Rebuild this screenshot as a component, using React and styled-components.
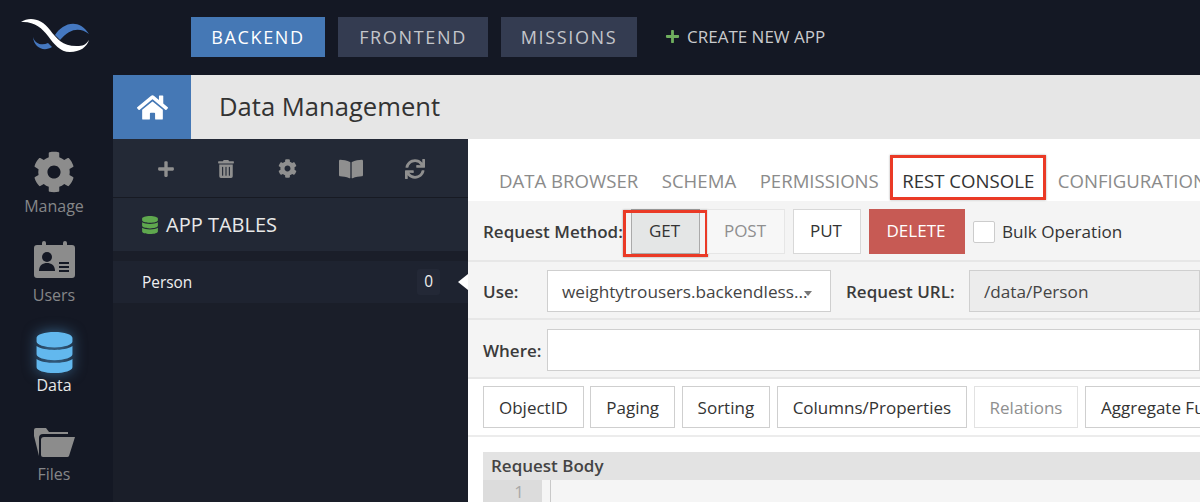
import React from 'react'
import styled, { createGlobalStyle } from 'styled-components'
import { FaHome, FaPlus, FaTrashAlt, FaCog, FaBookOpen, FaSync, FaDatabase } from 'react-icons/fa'

const GlobalStyle = createGlobalStyle`
  html, body {
    margin: 0;
    height: 100%;
    overflow: hidden;
    background: #141824;
    font-family: "Open Sans", "Liberation Sans", sans-serif;
  }
  * {
    box-sizing: border-box;
  }
`

const Page = styled.div`
  display: flex;
  flex-direction: column;
  width: 1200px;
  height: 502px;
  overflow: hidden;
`

const TopBar = styled.header`
  display: flex;
  align-items: flex-start;
  flex: 0 0 75px;
  padding-top: 17px;
`

const LogoSlot = styled.div`
  flex: 0 0 191px;
  margin-top: -7px;
  padding-left: 10px;
`

const NavButton = styled.div`
  display: flex;
  align-items: center;
  justify-content: center;
  width: ${(p) => p.$width}px;
  height: 40px;
  margin-right: 13px;
  background: ${(p) => (p.$active ? '#4578b5' : '#343c51')};
  color: ${(p) => (p.$active ? '#fff' : '#c4c6cb')};
  font-size: 18px;
  letter-spacing: 1.65px;
`

const CreateApp = styled.div`
  display: flex;
  align-items: center;
  gap: 7px;
  height: 38px;
  margin-left: 15px;
  color: #c9cacd;
  font-size: 17px;
  svg {
    color: #6fae5e;
  }
`

const Body = styled.div`
  display: flex;
  flex: 1;
  min-height: 0;
`

const Rail = styled.nav`
  display: flex;
  flex-direction: column;
  flex: 0 0 113px;
  padding: 63px 5px 0 0;
`

const RailItem = styled.div`
  display: flex;
  flex-direction: column;
  align-items: center;
  justify-content: flex-end;
  flex: 0 0 89.5px;
  padding-bottom: 12px;
  color: ${(p) => (p.$active ? '#e8e8e8' : '#858688')};
  font-size: 16px;
  line-height: 20px;
`

const RailIcon = styled.svg`
  display: block;
  margin-bottom: ${(p) => p.$gap}px;
  fill: #8c8c8c;
`

const GearSlot = styled.div`
  display: flex;
  margin-bottom: 3px;
  color: #8c8c8c;
`

const GlowIcon = styled.div`
  display: flex;
  margin-bottom: 2px;
  color: #62b8ee;
  filter: drop-shadow(0 0 7px rgba(86, 170, 230, 0.55));
`

const Main = styled.div`
  display: flex;
  flex-direction: column;
  flex: 1;
  min-width: 0;
`

const PageHeader = styled.div`
  display: flex;
  flex: 0 0 64px;
  background: #e6e6e6;
`

const HomeButton = styled.div`
  display: flex;
  align-items: center;
  justify-content: center;
  flex: 0 0 78px;
  background: #4578b5;
  color: #fff;
`

const PageTitle = styled.h1`
  margin: 0 0 0 28px;
  color: #333;
  font-size: 25.6px;
  font-weight: 400;
  line-height: 64px;
`

const Content = styled.div`
  display: flex;
  flex: 1;
  min-height: 0;
`

const Sidebar = styled.aside`
  display: flex;
  flex-direction: column;
  flex: 0 0 355px;
  background: #1a1e29;
`

const SideTools = styled.div`
  display: flex;
  align-items: center;
  flex: 0 0 59px;
  padding-top: 1px;
  background: #232936;
  border-bottom: 1px solid #171a23;
  color: #8f8f8f;
`

const ToolSlot = styled.div`
  display: flex;
  justify-content: center;
  width: ${(p) => p.$width}px;
  margin-left: ${(p) => p.$left || 0}px;
`

const SideHeading = styled.div`
  display: flex;
  align-items: center;
  gap: 7px;
  flex: 0 0 53px;
  padding: 0 0 0 28px;
  background: #222835;
  color: #e8e8e8;
  font-size: 20px;
  svg {
    color: #5fa84e;
  }
`

const SideRow = styled.div`
  position: relative;
  display: flex;
  align-items: center;
  justify-content: space-between;
  height: 42px;
  margin-top: 10px;
  padding: 0 28px 0 29px;
  background: #1e2330;
  color: #f0f0f0;
  font-size: 15.4px;
  &::after {
    content: '';
    position: absolute;
    top: 13px;
    right: 0;
    border: 8px solid transparent;
    border-right: 10px solid #fff;
    border-left: 0;
  }
`

const Count = styled.span`
  padding: 2px 7px;
  border-radius: 3px;
  background: #232836;
  font-size: 15.4px;
  line-height: 22px;
`

const Panel = styled.section`
  flex: 1;
  min-width: 0;
  overflow: hidden;
  background: #fff;
`

const Tabs = styled.div`
  display: flex;
  align-items: flex-end;
  gap: 23.5px;
  height: 62px;
  padding: 0 0 1px 31px;
  white-space: nowrap;
`

const Tab = styled.div`
  position: relative;
  padding-bottom: 5px;
  border-bottom: 2px solid ${(p) => (p.$active ? '#4578b5' : 'transparent')};
  color: ${(p) => (p.$active ? '#333' : '#8b8b8b')};
  font-size: 18.6px;
  line-height: 24px;
`

// red annotation drawn over the screenshot
const Highlight = styled.span`
  position: absolute;
  top: ${(p) => p.$top}px;
  right: ${(p) => p.$side}px;
  bottom: ${(p) => p.$bottom}px;
  left: ${(p) => p.$side}px;
  border: 3px solid #ea3a26;
  box-shadow: 0 0 2px rgba(0, 0, 0, 0.35);
  pointer-events: none;
`

const FormRow = styled.div`
  display: flex;
  align-items: center;
  height: ${(p) => p.$height}px;
  padding: ${(p) => p.$top || 0}px 0 0 15px;
  background: #f4f4f4;
  border-bottom: 2px solid #e7e7e7;
  color: #333;
  font-size: 17.1px;
  white-space: nowrap;
`

const FieldLabel = styled.label`
  flex: 0 0 ${(p) => p.$width}px;
  padding-left: ${(p) => p.$indent || 0}px;
  font-weight: 600;
  font-size: 17px;
  color: #3b3b3b;
`

const MethodButton = styled.div`
  position: relative;
  display: flex;
  align-items: center;
  justify-content: center;
  width: ${(p) => p.$width}px;
  height: 45px;
  margin-right: ${(p) => p.$gap}px;
  padding: 0 2px 2px 0;
  background: ${(p) => p.$bg || '#fff'};
  border: 1px solid ${(p) => p.$border || '#d8d8d8'};
  color: ${(p) => p.$color || '#333'};
  font-size: 17px;
`

const Checkbox = styled.span`
  flex: 0 0 22px;
  height: 22px;
  margin: 0 7px 0 0;
  background: #fff;
  border: 1px solid #ccc;
  border-radius: 2px;
`

const Field = styled.div`
  display: flex;
  align-items: center;
  flex: ${(p) => (p.$width ? `0 0 ${p.$width}px` : 1)};
  height: 42px;
  padding: 0 14px;
  background: ${(p) => p.$bg || '#fff'};
  border: 1px solid #cfcfcf;
  color: #444;
  font-size: 17.2px;
`

const Caret = styled.span`
  margin: 4px 0 0 -3px;
  border: 4px solid transparent;
  border-top: 5px solid #777;
  border-bottom: 0;
`

const OptionRow = styled.div`
  display: flex;
  align-items: center;
  gap: 6.5px;
  height: 58px;
  padding-left: 15px;
  border-bottom: 2px solid #ececec;
  white-space: nowrap;
`

const OptionButton = styled.div`
  display: flex;
  align-items: center;
  flex: none;
  height: 42px;
  padding: 0 15px;
  background: #fff;
  border: 1px solid ${(p) => (p.$disabled ? '#e2e2e2' : '#cfcfcf')};
  color: ${(p) => (p.$disabled ? '#8f8f8f' : '#333')};
  font-size: 17px;
`

const BodyPanel = styled.div`
  margin: 15px 0 0 15px;
`

const BodyHeader = styled.div`
  height: 28px;
  padding-left: 8px;
  background: #e3e3e3;
  color: #444;
  font-size: 17px;
  font-weight: 600;
  line-height: 27px;
`

const Editor = styled.div`
  display: flex;
  height: 30px;
  background: #f5f5f5;
`

const Gutter = styled.div`
  flex: 0 0 59px;
  padding-right: 18px;
  background: #dcdcdc;
  color: #a8a8a8;
  font-size: 17px;
  line-height: 24px;
  text-align: right;
`

const Cursor = styled.div`
  width: 1px;
  margin-left: 8px;
  background: #c9c9c9;
`

const Logo = () => (
  <svg width="90" height="50" viewBox="0 0 90 50">
    <path d="M23 27C25 34 32 36 38 33L42 37C34 42 24 38 23 27Z" fill="#4578c0" />
    <path d="M45 25C52 14 68 7 79 24C70 17 60 18 50 30Z" fill="#4578c0" />
    <path d="M11 12C20 6 32 9 40 20C47 29 53 37 69 36C74 36 77 33 79 30C77 37 70 42 60 42C50 42 44 34 38 26C32 18 24 11 11 12Z" fill="#fff" />
  </svg>
)

const BadgeIcon = () => (
  <RailIcon $gap={7} width="41" height="37" viewBox="0 0 41 37">
    <path d="M3 4H8V2A2 2 0 0 1 12 2V4H29V2A2 2 0 0 1 33 2V4H38A3 3 0 0 1 41 7V34A3 3 0 0 1 38 37H3A3 3 0 0 1 0 34V7A3 3 0 0 1 3 4Z" />
    <circle cx="13" cy="16" r="5" fill="#141824" />
    <path d="M5 30C5 24 9 22 13 22S21 24 21 30Z" fill="#141824" />
    <path d="M25 21H35V23H25ZM25 25H35V27H25ZM25 29H35V31H25Z" fill="#141824" />
  </RailIcon>
)

const FolderIcon = () => (
  <RailIcon $gap={6} width="41" height="30" viewBox="0 0 41 30">
    <path d="M0 2A2 2 0 0 1 2 0H12L15 4H34V6H9A4 4 0 0 0 5 10V28L0 8Z" />
    <path d="M7 12A3 3 0 0 1 10 9H41L35 28A2 2 0 0 1 33 29H9A2 2 0 0 1 7 27Z" />
  </RailIcon>
)

const options = [
  { label: 'ObjectID' },
  { label: 'Paging' },
  { label: 'Sorting' },
  { label: 'Columns/Properties' },
  { label: 'Relations', disabled: true },
  { label: 'Aggregate Functions' },
]

const App = () => {
  return (
    <Page>
      <GlobalStyle />
      <TopBar>
        <LogoSlot>
          <Logo />
        </LogoSlot>
        <NavButton $active $width={134}>BACKEND</NavButton>
        <NavButton $width={150}>FRONTEND</NavButton>
        <NavButton $width={136}>MISSIONS</NavButton>
        <CreateApp>
          <FaPlus size={15} />
          CREATE NEW APP
        </CreateApp>
      </TopBar>
      <Body>
        <Rail>
          <RailItem>
            <GearSlot>
              <FaCog size={42} />
            </GearSlot>
            Manage
          </RailItem>
          <RailItem>
            <BadgeIcon />
            Users
          </RailItem>
          <RailItem $active>
            <GlowIcon>
              <FaDatabase size={41} />
            </GlowIcon>
            Data
          </RailItem>
          <RailItem>
            <FolderIcon />
            Files
          </RailItem>
        </Rail>
        <Main>
          <PageHeader>
            <HomeButton>
              <FaHome size={31} />
            </HomeButton>
            <PageTitle>Data Management</PageTitle>
          </PageHeader>
          <Content>
            <Sidebar>
              <SideTools>
                <ToolSlot $left={24} $width={58}><FaPlus size={18} /></ToolSlot>
                <ToolSlot $width={62}><FaTrashAlt size={18} /></ToolSlot>
                <ToolSlot $width={60}><FaCog size={19} /></ToolSlot>
                <ToolSlot $width={68}><FaBookOpen size={24} /></ToolSlot>
                <ToolSlot $width={60}><FaSync size={20} /></ToolSlot>
              </SideTools>
              <SideHeading>
                <FaDatabase size={18} />
                APP TABLES
              </SideHeading>
              <SideRow>
                Person
                <Count>0</Count>
              </SideRow>
            </Sidebar>
            <Panel>
              <Tabs>
                <Tab>DATA BROWSER</Tab>
                <Tab>SCHEMA</Tab>
                <Tab>PERMISSIONS</Tab>
                <Tab $active>
                  REST CONSOLE
                  <Highlight $top={-14} $bottom={-2} $side={-12} />
                </Tab>
                <Tab>CONFIGURATION</Tab>
              </Tabs>
              <FormRow $height={61} $top={2}>
                <FieldLabel $width={148}>Request Method:</FieldLabel>
                <MethodButton $width={69} $gap={7} $bg="#e4e6e6" $border="#aaa">
                  GET
                  <Highlight $top={0} $bottom={-4} $side={-9} />
                </MethodButton>
                <MethodButton $width={78} $gap={8} $bg="#f7f7f7" $border="#e6e6e6" $color="#8f8f8f">POST</MethodButton>
                <MethodButton $width={68} $gap={8}>PUT</MethodButton>
                <MethodButton $width={96} $gap={8} $bg="#c75a54" $border="#c75a54" $color="#fff">DELETE</MethodButton>
                <Checkbox />
                Bulk Operation
              </FormRow>
              <FormRow $height={58} $top={2}>
                <FieldLabel $width={64}>Use:</FieldLabel>
                <Field $width={284}>
                  weightytrousers.backendless...
                  <Caret />
                </Field>
                <FieldLabel $width={138} $indent={15}>Request URL:</FieldLabel>
                <Field $bg="#ececec">/data/Person</Field>
              </FormRow>
              <FormRow $height={59} $top={3}>
                <FieldLabel $width={64}>Where:</FieldLabel>
                <Field />
              </FormRow>
              <OptionRow>
                {options.map((option) => (
                  <OptionButton key={option.label} $disabled={option.disabled}>
                    {option.label}
                  </OptionButton>
                ))}
              </OptionRow>
              <BodyPanel>
                <BodyHeader>Request Body</BodyHeader>
                <Editor>
                  <Gutter>1</Gutter>
                  <Cursor />
                </Editor>
              </BodyPanel>
            </Panel>
          </Content>
        </Main>
      </Body>
    </Page>
  )
}

export default App
